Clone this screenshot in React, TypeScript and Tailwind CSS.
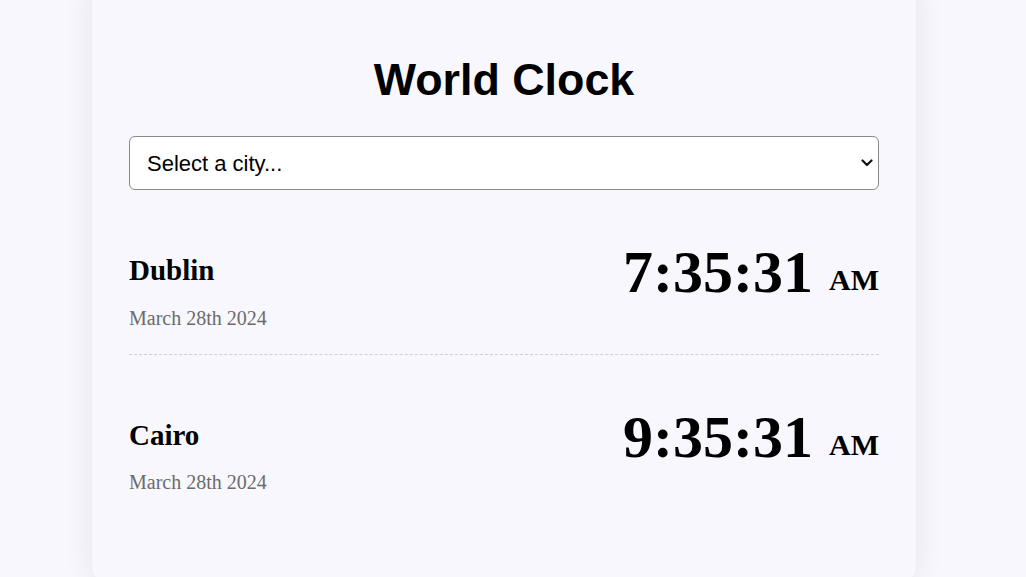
import React from "react";

const cities = [
  { name: "Dublin", date: "March 28th 2024", time: "7:35:31", ampm: "AM" },
  { name: "Cairo", date: "March 28th 2024", time: "9:35:31", ampm: "AM" },
];

export default function App() {
  return (
    <div className="h-[577px] w-full overflow-hidden bg-[#f8f7fd]">
      <div className="flex justify-center pr-[18px]">
        <div className="-mt-[24px] w-[824px] rounded-[16px] bg-[#f8f7fd] px-[37px] pt-[70px] pb-[64px] shadow-[0_0_28px_rgba(60,60,90,0.10)]">
          <h1 className="text-center text-[44.8px] font-bold leading-normal text-black [font-family:'Liberation_Sans',Arial,sans-serif]">
            World Clock
          </h1>
          <div className="relative mt-[23px]">
            <select className="block h-[54px] w-full appearance-none rounded-[6px] border border-[#8a8a8a] bg-white pl-[17px] pr-[30px] text-[22px] text-black [font-family:'Liberation_Sans',Arial,sans-serif]">
              <option>Select a city...</option>
            </select>
            <svg
              className="pointer-events-none absolute right-[6px] top-[23px]"
              width="12"
              height="8"
              viewBox="0 0 12 8"
              fill="none"
            >
              <path d="M1.5 1.5 L6 6 L10.5 1.5" stroke="#111" strokeWidth="2.2" strokeLinecap="round" strokeLinejoin="round" />
            </svg>
          </div>
          <div>
            {cities.map((c, i) => (
              <div
                key={c.name}
                className={
                  "flex items-start justify-between pt-[59px] pb-[21px] [font-family:'Liberation_Serif','Times_New_Roman',serif] " +
                  (i < cities.length - 1 ? "border-b border-dashed border-[#cfcfd6]" : "")
                }
              >
                <div className="flex flex-col">
                  <div className="text-[29px] font-bold leading-normal text-black">{c.name}</div>
                  <div className="mt-[10px] text-[20px] leading-normal text-[#6b6b6b]">{c.date}</div>
                </div>
                <div className="-mt-[22px] flex items-baseline text-black">
                  <span className="text-[60px] font-bold leading-normal">{c.time}</span>
                  <span className="relative -top-[2px] ml-[16px] text-[30px] font-bold leading-normal">{c.ampm}</span>
                </div>
              </div>
            ))}
          </div>
        </div>
      </div>
    </div>
  );
}
